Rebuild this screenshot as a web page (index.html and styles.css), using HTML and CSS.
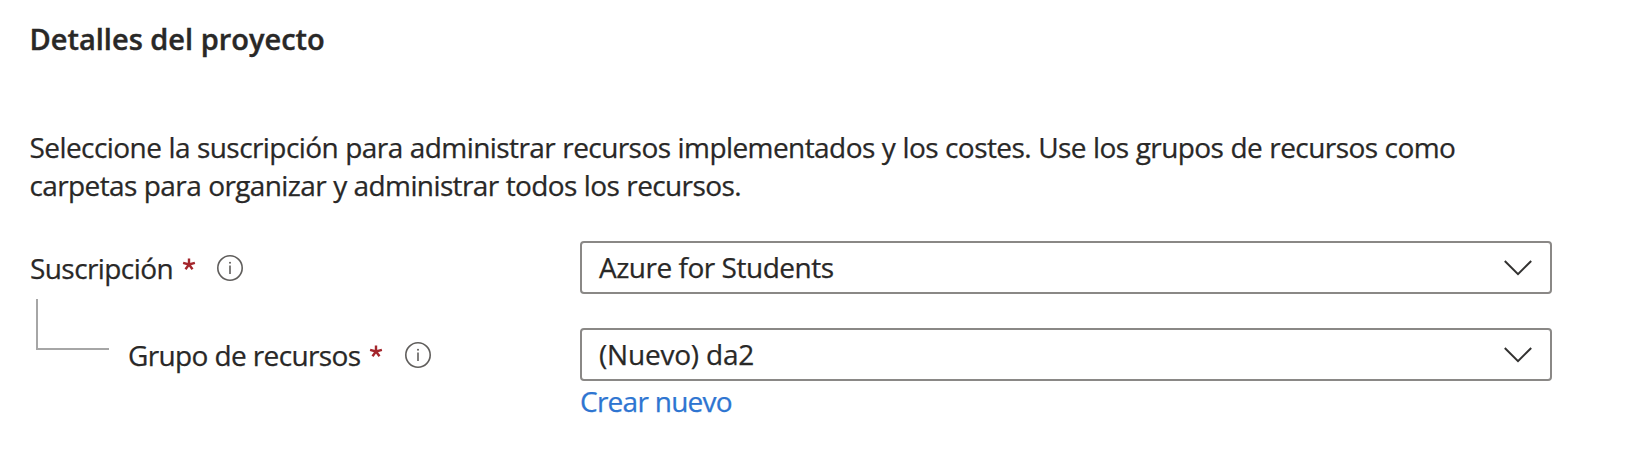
FILE: index.html
```html
<!DOCTYPE html>
<html lang="es">
<head>
<meta charset="utf-8">
<title>Detalles del proyecto</title>
<link rel="stylesheet" href="styles.css">
</head>
<body>
<main class="section">
  <h2 class="title">Detalles del proyecto</h2>
  <p class="intro">Seleccione la suscripción para administrar recursos implementados y los costes. Use los grupos de recursos como<br><span class="intro-end">carpetas para organizar y administrar todos los recursos.</span></p>
  <div class="row">
    <div class="label"><span class="name subscription">Suscripción</span>
      <svg class="req" viewBox="0 0 14 14"><path d="M7 7.500V1.500M7 7.500L12.900 5.900M7 7.500l3.500 4.800M7 7.500l-3.500 4.800M7 7.500L1.100 5.900"/></svg>
      <svg class="info" viewBox="0 0 26 26"><circle cx="13" cy="13" r="12.200"/><path d="M13 10.500v8.500"/><circle class="dot" cx="13" cy="7.700" r="1"/></svg>
    </div>
    <div class="select"><span class="azure">Azure for Students</span><svg class="chevron" viewBox="0 0 28 16"><path d="M.8 1L14 14.200 27.200 1"/></svg></div>
  </div>
  <div class="row child">
    <div class="label"><i class="branch"></i><span class="name group">Grupo de recursos</span>
      <svg class="req" viewBox="0 0 14 14"><path d="M7 7.500V1.500M7 7.500L12.900 5.900M7 7.500l3.500 4.800M7 7.500l-3.500 4.800M7 7.500L1.100 5.900"/></svg>
      <svg class="info" viewBox="0 0 26 26"><circle cx="13" cy="13" r="12.200"/><path d="M13 10.500v8.500"/><circle class="dot" cx="13" cy="7.700" r="1"/></svg>
    </div>
    <div class="select"><span class="nuevo">(Nuevo) da2</span><svg class="chevron" viewBox="0 0 28 16"><path d="M.8 1L14 14.200 27.200 1"/></svg></div>
  </div>
  <a class="create">Crear nuevo</a>
</main>
</body>
</html>
```
FILE: styles.css
```css
body { margin: 0; background: #fff; color: #292827; font: 28px/38px "Open Sans", "Noto Sans", sans-serif; -webkit-text-stroke: .25px; }
.section { padding: 20px 0 0 30px; }
.title { margin: 0 0 0 -.5px; font-size: 29px; font-weight: 600; line-height: 38px; -webkit-text-stroke: .4px; }
.intro { margin: 70px 0 0 -.5px; white-space: nowrap; letter-spacing: -.57px; word-spacing: .4px; }
.intro-end { letter-spacing: -.61px; }
.row { display: flex; margin-top: 37px; height: 53px; }
.child { margin-top: 34px; }
.label { display: flex; align-items: center; width: 550px; }
.name { white-space: nowrap; }
.subscription { width: 152px; letter-spacing: -.58px; }
.group { width: 241px; letter-spacing: -.62px; }
.req { width: 14px; height: 14px; margin: 0 21px 8px 0; fill: none; stroke: #a4262c; stroke-width: 2.4; }
.info { width: 26px; height: 26px; margin-top: 1px; fill: none; stroke: #605e5c; stroke-width: 1.6; }
.child .info { margin-left: 1px; }
.dot { fill: #605e5c; stroke: none; }
.select { box-sizing: border-box; display: flex; align-items: center; justify-content: space-between; width: 972px; height: 53px; padding: 0 18px 0 17px; border: 2px solid #8a8886; border-radius: 4px; }
.azure, .nuevo { padding-bottom: 2px; }
.azure { letter-spacing: -.48px; }
.nuevo { letter-spacing: -.2px; }
.chevron { width: 28px; height: 16px; fill: none; stroke: #323130; stroke-width: 2; }
.branch { box-sizing: border-box; width: 73px; height: 51px; margin: -60px 19px 0 6px; border: solid #a6a6a6; border-width: 0 0 2px 2px; }
.create { display: block; margin: 1px 0 0 550px; color: #2e75d1; letter-spacing: -.73px; }
```
